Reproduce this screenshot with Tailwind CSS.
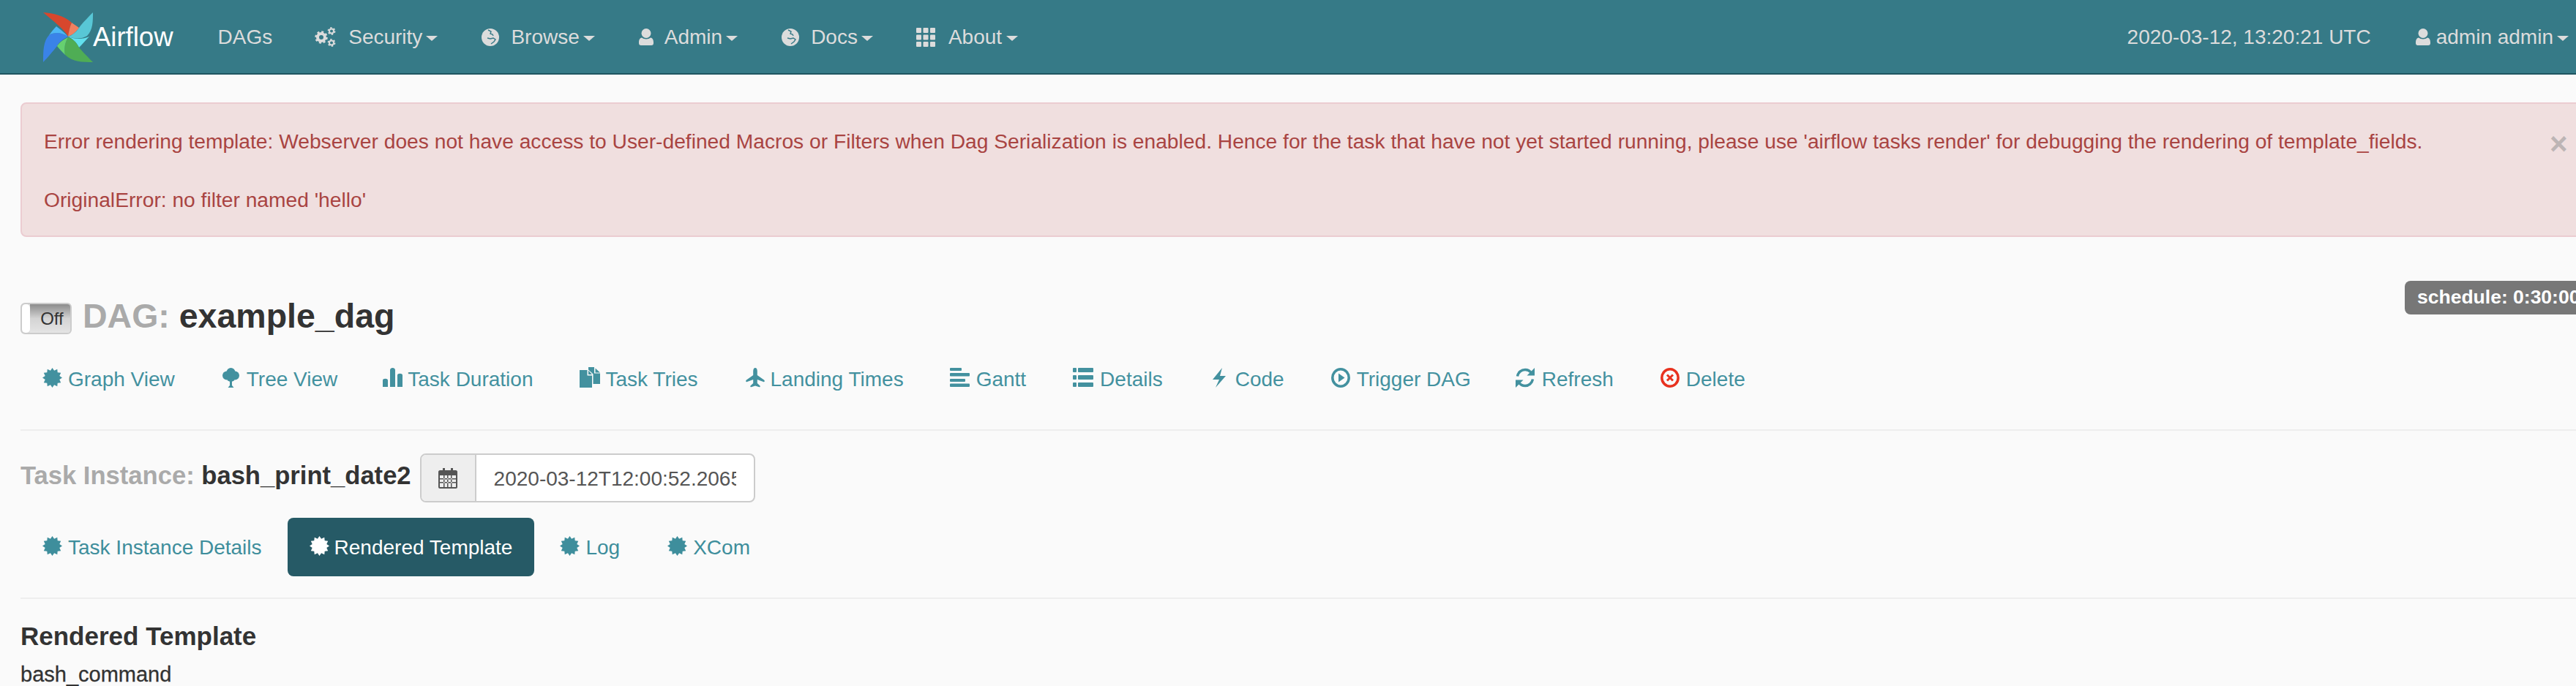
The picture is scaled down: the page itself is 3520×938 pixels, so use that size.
<!DOCTYPE html>
<html lang="en">
<head>
  <script src="https://cdn.jsdelivr.net/npm/@tailwindcss/browser@4"></script>
  <meta charset="UTF-8">
  <title>Airflow - Rendered Template</title>
</head>
<body class="h-[938px] overflow-hidden bg-[#fafafa] font-['Liberation_Sans',Arial,sans-serif] text-[28px] leading-[40px] text-[#333]">
<!-- shared icons -->
<svg class="hidden">
  <symbol id="cert" viewBox="0 0 24 24"><polygon fill="currentColor" points="24,12 20.7,9.7 22.39,6 18.4,5.6 18,1.61 14.3,3.3 12,0 9.7,3.3 6,1.61 5.6,5.6 1.61,6 3.3,9.7 0,12 3.3,14.3 1.61,18 5.6,18.4 6,22.39 9.7,20.7 12,24 14.3,20.7 18,22.39 18.4,18.4 22.39,18 20.7,14.3"/></symbol>
  <symbol id="globe" viewBox="0 0 24 24"><circle cx="12" cy="12" r="12" fill="currentColor"/><path fill="none" stroke="#367a87" stroke-width="1.4" d="M9 2l4 2-1 3 3 1 1 2M8 13l4 1 4-1 3 2-2 3-4 3"/></symbol>
  <symbol id="user" viewBox="0 0 20 23"><circle cx="10" cy="6.500" r="6.500" fill="currentColor"/><path fill="currentColor" d="M4 12.500c3 2.500 9 2.500 12 0 3 .5 4 3.500 4 6.500v1c0 2-1 3-3 3H3c-2 0-3-1-3-3v-1c0-3 1-6 4-6.500z"/></symbol>
</svg>

<!-- Navbar -->
<nav class="flex h-[102px] items-center border-b-2 border-[#1f5560] bg-[#367a87] pt-[1px] text-[#dcdcdc]">
  <svg viewBox="0 0 68 68" class="ml-[59px] h-[68px] w-[68px] shrink-0">
    <path fill="#d7472d" d="M0 0C14 1 28 4 39 14C36 20 35 27 34 33C30 24 14 12 0 0Z"/>
    <path fill="#f0805f" d="M39 14C42 16 46 19 49 21C44 28 39 31 34 33C35 27 36 20 39 14Z"/>
    <path fill="#58c7d6" d="M68 0C68 12 68 24 60 32C52 37 42 36 34 33C40 31 45 27 49 21C54 14 62 6 68 0Z"/>
    <path fill="#62e0ee" d="M34 33C44 37 54 37 63 33C58 38 54 43 49 48C45 40 40 36 34 33Z"/>
    <path fill="#3a83e8" d="M0 68C0 52 0 40 8 31C16 26 26 28 34 33C28 36 22 40 19 46C14 52 6 62 0 68Z"/>
    <path fill="#4db7f5" d="M8 31C11 27 14 23 18 19C24 24 30 28 34 33C26 28 16 26 8 31Z"/>
    <path fill="#4fad55" d="M68 68C54 68 40 68 30 58C28 50 30 40 34 34C40 36 45 40 49 48C54 54 62 62 68 68Z"/>
    <path fill="#66d070" d="M34 34C28 37 22 41 19 46C22 50 26 54 30 58C28 50 30 40 34 34Z"/>
  </svg>
  <span class="text-[36.5px] leading-[40px] text-white">Airflow</span>
  <span class="ml-[61px]">DAGs</span>

  <svg viewBox="0 0 29 27" class="ml-[58px] h-[27px] w-[29px]" fill="none" stroke="currentColor"><circle cx="9" cy="14" r="5" stroke-width="4"/><circle cx="9" cy="14" r="7.500" stroke-width="2.500" stroke-dasharray="3 2.890"/><circle cx="23" cy="5.500" r="3" stroke-width="2"/><circle cx="23" cy="5.500" r="4.600" stroke-width="1.600" stroke-dasharray="2.400 2.420"/><circle cx="23" cy="21.500" r="3" stroke-width="2"/><circle cx="23" cy="21.500" r="4.600" stroke-width="1.600" stroke-dasharray="2.400 2.420"/></svg>
  <span class="ml-[17px]">Security</span><span class="ml-[5px] mt-[3px] h-0 w-0 border-x-[8px] border-t-[7px] border-x-transparent border-t-[#dcdcdc]"></span>

  <svg class="ml-[60px] h-[24px] w-[24px]"><use href="#globe"/></svg>
  <span class="ml-[16px]">Browse</span><span class="ml-[5px] mt-[3px] h-0 w-0 border-x-[8px] border-t-[7px] border-x-transparent border-t-[#dcdcdc]"></span>

  <svg class="ml-[60px] h-[23px] w-[20px]"><use href="#user"/></svg>
  <span class="ml-[15px]">Admin</span><span class="ml-[5px] mt-[3px] h-0 w-0 border-x-[8px] border-t-[7px] border-x-transparent border-t-[#dcdcdc]"></span>

  <svg class="ml-[60px] h-[24px] w-[24px]"><use href="#globe"/></svg>
  <span class="ml-[16px]">Docs</span><span class="ml-[5px] mt-[3px] h-0 w-0 border-x-[8px] border-t-[7px] border-x-transparent border-t-[#dcdcdc]"></span>

  <svg viewBox="0 0 26 26" class="ml-[59px] h-[26px] w-[26px]" fill="currentColor"><rect width="7" height="7" rx="1"/><rect x="9.500" width="7" height="7" rx="1"/><rect x="19" width="7" height="7" rx="1"/><rect y="9.500" width="7" height="7" rx="1"/><rect x="9.500" y="9.500" width="7" height="7" rx="1"/><rect x="19" y="9.500" width="7" height="7" rx="1"/><rect y="19" width="7" height="7" rx="1"/><rect x="9.500" y="19" width="7" height="7" rx="1"/><rect x="19" y="19" width="7" height="7" rx="1"/></svg>
  <span class="ml-[18px]">About</span><span class="ml-[6px] mt-[3px] h-0 w-0 border-x-[8px] border-t-[7px] border-x-transparent border-t-[#dcdcdc]"></span>

  <span class="ml-auto">2020-03-12, 13:20:21 UTC</span>
  <svg class="ml-[61px] h-[23px] w-[20px]"><use href="#user"/></svg>
  <span class="ml-[8px]">admin admin</span><span class="ml-[5px] mr-[10px] mt-[3px] h-0 w-0 border-x-[8px] border-t-[7px] border-x-transparent border-t-[#dcdcdc]"></span>
</nav>

<main class="pl-[28px]">
  <!-- Alert runs past the right edge of the window -->
  <div class="relative mt-[38px] mr-[-40px] rounded-[8px] border-2 border-[#ebccd1] bg-[#f0dfdf] pt-[31px] pb-[29px] pl-[30px] text-[28.2px] text-[#a94442]">
    <p>Error rendering template: Webserver does not have access to User-defined Macros or Filters when Dag Serialization is enabled. Hence for the task that have not yet started running, please use 'airflow tasks render' for debugging the rendering of template_fields.</p>
    <p class="mt-[40px]">OriginalError: no filter named 'hello'</p>
    <span class="absolute left-[3454px] top-[34px] text-[42px] font-bold leading-[42px] text-[#bdb5b5]">×</span>
  </div>

  <!-- DAG title -->
  <div class="mt-[90px] flex h-[43px] items-start">
    <div class="flex h-[43px] w-[70px] shrink-0 overflow-hidden rounded-[6px] border-2 border-[#ccc] bg-[#ddd]">
      <div class="w-[11px] rounded-[5px] bg-white"></div>
      <div class="flex flex-1 items-center justify-center bg-gradient-to-b from-[#8c8c8c] via-[#d4d4d4] to-[#e4e4e4] pl-[5px] text-[24px] text-[#333]">Off</div>
    </div>
    <h3 class="ml-[15px] -mt-[8px] whitespace-nowrap text-[46.5px] font-bold leading-[52px]"><span class="text-[#aaa]">DAG:</span> example_dag</h3>
    <span class="absolute left-[3286px] top-[384px] h-[46px] w-[300px] rounded-[8px] bg-[#777] pl-[17px] text-[26.5px] font-bold leading-[44px] text-white">schedule: 0:30:00</span>
  </div>

  <!-- DAG views -->
  <ul class="mt-[21px] flex h-[80px] items-center text-[#43919f]">
    <li class="flex items-center px-[30px] pt-[2px]"><svg class="mr-[8px] -mt-[6px] h-[27px] w-[27px]"><use href="#cert"/></svg>Graph View</li>
    <li class="ml-[5px] flex items-center px-[30px] pt-[2px]">
      <svg viewBox="0 0 23 27" class="mr-[10px] -mt-[6px] h-[27px] w-[23px]" fill="currentColor"><circle cx="11.500" cy="6" r="6"/><circle cx="6" cy="10.500" r="6"/><circle cx="17" cy="10.500" r="6"/><circle cx="11.500" cy="13" r="6"/><path d="M10 15h3v9l2.500 3h-8l2.500-3z"/></svg>Tree View</li>
    <li class="ml-[2px] flex items-center px-[30px] pt-[2px]">
      <svg viewBox="0 0 27 26" class="mr-[7px] -mt-[6px] h-[26px] w-[27px]" fill="currentColor"><path d="M0 17c0-3 7-3 7 0v9H0zM10 3c0-4 7-4 7 0v23h-7zM20 10c0-3 7-3 7 0v16h-7z"/></svg>Task Duration</li>
    <li class="ml-[4px] flex items-center px-[30px] pt-[2px]">
      <svg viewBox="0 0 28 28" class="mr-[7px] -mt-[6px] h-[28px] w-[28px]" fill="currentColor"><path d="M0 4h10.500v7.500H17V28H0zM12 4.500l5 5.500h-5zM12 0h8v8.500h8V23H18.500V9.500L12 3.500zM21.500 1.500l6.500 6h-6.500z"/></svg>Task Tries</li>
    <li class="ml-[5px] flex items-center px-[30px] pt-[2px]">
      <svg viewBox="0 0 26 27" class="mr-[8px] -mt-[6px] h-[27px] w-[26px]" fill="currentColor"><path d="M13 0c1.800 0 2.800 2 2.800 4.500V10L25 16.500c.8.5 1 1.500.6 2.300-.4.500-1 .5-1.600.2L15.800 16v5l3.700 3.500c.5.800 0 2-1 1.700L13 24.500 7.500 26.200c-1 .3-1.500-.9-1-1.700L10.200 21v-5L2 19c-.6.3-1.200.3-1.600-.2-.4-.8-.2-1.800.6-2.300L10.200 10V4.500C10.200 2 11.200 0 13 0z"/></svg>Landing Times</li>
    <li class="ml-[3px] flex items-center px-[30px] pt-[2px]">
      <svg viewBox="0 0 27 26" class="mr-[9px] -mt-[6px] h-[26px] w-[27px]" fill="currentColor"><rect width="16" height="4" rx="1"/><rect y="7" width="27" height="4.500" rx="1"/><rect y="15" width="21" height="4" rx="1"/><rect y="21.500" width="27" height="4.500" rx="1"/></svg>Gantt</li>
    <li class="ml-[4px] flex items-center px-[30px] pt-[2px]">
      <svg viewBox="0 0 28 26" class="mr-[9px] -mt-[6px] h-[26px] w-[28px]" fill="currentColor"><rect width="5" height="6" rx="1"/><rect x="7" width="21" height="6" rx="1"/><rect y="10" width="5" height="6" rx="1"/><rect x="7" y="10" width="21" height="6" rx="1"/><rect y="20" width="5" height="6" rx="1"/><rect x="7" y="20" width="21" height="6" rx="1"/></svg>Details</li>
    <li class="ml-[8px] flex items-center px-[30px] pt-[2px]">
      <svg viewBox="0 0 18 27" class="mr-[13px] -mt-[6px] h-[27px] w-[18px]" fill="currentColor"><path d="M13 0L0 16h9L4 27 18 11h-8z"/></svg>Code</li>
    <li class="ml-[4px] flex items-center px-[30px] pt-[2px]">
      <svg viewBox="0 0 26 27" class="mr-[9px] -mt-[6px] h-[27px] w-[26px]" fill="none" stroke="currentColor" stroke-width="3.500"><ellipse cx="13" cy="13.500" rx="11.200" ry="11.700"/><path fill="currentColor" stroke="none" d="M10 7.500l8.500 6-8.500 6z"/></svg>Trigger DAG</li>
    <li class="ml-[1px] flex items-center px-[30px] pt-[2px]">
      <svg viewBox="0 0 26 27" class="mr-[10px] -mt-[6px] h-[27px] w-[26px]" fill="none" stroke="currentColor" stroke-width="3.500"><path d="M2.500 11.500C3.500 6 8 2.500 13 2.500c3.500 0 6.500 1.500 8.500 4.500M23.500 15.500c-1 5.500-5.500 9-10.500 9-3.500 0-6.500-1.500-8.500-4.500"/><path fill="currentColor" stroke="none" d="M26 0v10.500H15.500zM0 27V16.500h10.500z"/></svg>Refresh</li>
    <li class="ml-[4px] flex items-center px-[30px] pt-[2px]">
      <svg viewBox="0 0 26 27" class="mr-[9px] -mt-[6px] h-[27px] w-[26px]" fill="none" stroke="#e8321f" stroke-width="3.500"><ellipse cx="13" cy="13.500" rx="11.200" ry="11.700"/><path stroke-width="3" d="M9 9.500l8 8M17 9.500l-8 8"/></svg>Delete</li>
  </ul>

  <hr class="mt-[29px] h-[2px] border-0 bg-[#eee]">

  <!-- Task instance -->
  <div class="mt-[31px] flex h-[67px] items-center">
    <h4 class="-mt-[8px] whitespace-nowrap text-[34.6px] font-bold"><span class="text-[#aaa]">Task Instance:</span> bash_print_date2</h4>
    <div class="ml-[12px] flex h-[67px] w-[458px] shrink-0 overflow-hidden rounded-[8px] border-2 border-[#ccc] bg-white">
      <div class="flex w-[75px] shrink-0 items-center justify-center border-r-2 border-[#ccc] bg-[#eee] text-[#555]">
        <svg viewBox="0 0 26 28" class="h-[28px] w-[26px]" fill="currentColor"><path fill-rule="evenodd" d="M2 3h4V0h3v3h8V0h3v3h4c1 0 2 1 2 2v21c0 1-1 2-2 2H2c-1 0-2-1-2-2V5c0-1 1-2 2-2zM2 10v16h22V10zM7 10v16h1.500V10zM12 10v16h1.500V10zM17 10v16h1.500V10zM2 14h22v1.500H2zM2 19h22v1.500H2z"/></svg>
      </div>
      <div class="mx-[24px] overflow-hidden whitespace-nowrap leading-[65px] text-[#555]">2020-03-12T12:00:52.206543+00:00</div>
    </div>
  </div>

  <ul class="mt-[21px] flex h-[80px] items-center text-[#3e8e9c]">
    <li class="flex items-center px-[30px] pt-[2px]"><svg class="mr-[8px] -mt-[6px] h-[27px] w-[27px]"><use href="#cert"/></svg>Task Instance Details</li>
    <li class="ml-[5px] flex h-[80px] items-center rounded-[8px] bg-[#265a66] px-[30px] pt-[2px] text-white"><svg class="mr-[7px] -mt-[6px] h-[27px] w-[27px]"><use href="#cert"/></svg>Rendered Template</li>
    <li class="ml-[5px] flex items-center px-[30px] pt-[2px]"><svg class="mr-[8px] -mt-[6px] h-[27px] w-[27px]"><use href="#cert"/></svg>Log</li>
    <li class="ml-[5px] flex items-center px-[30px] pt-[2px]"><svg class="mr-[8px] -mt-[6px] h-[27px] w-[27px]"><use href="#cert"/></svg>XCom</li>
  </ul>

  <hr class="mt-[29px] h-[2px] border-0 bg-[#eee]">

  <h4 class="mt-[31px] text-[35px] font-bold">Rendered Template</h4>
  <h5 class="mt-[12px] text-[29px] [-webkit-text-stroke:0.3px_currentColor]">bash_command</h5>
</main>
</body>
</html>
